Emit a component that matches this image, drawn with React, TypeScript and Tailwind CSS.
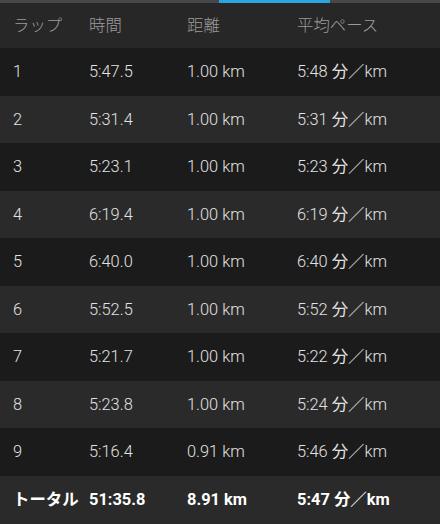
const laps = [
  { lap: "1", time: "5:47.5", dist: "1.00 km", pace: "5:48" },
  { lap: "2", time: "5:31.4", dist: "1.00 km", pace: "5:31" },
  { lap: "3", time: "5:23.1", dist: "1.00 km", pace: "5:23" },
  { lap: "4", time: "6:19.4", dist: "1.00 km", pace: "6:19" },
  { lap: "5", time: "6:40.0", dist: "1.00 km", pace: "6:40" },
  { lap: "6", time: "5:52.5", dist: "1.00 km", pace: "5:52" },
  { lap: "7", time: "5:21.7", dist: "1.00 km", pace: "5:22" },
  { lap: "8", time: "5:23.8", dist: "1.00 km", pace: "5:24" },
  { lap: "9", time: "5:16.4", dist: "0.91 km", pace: "5:46" },
];

const cols = "grid grid-cols-[76px_98px_110px_1fr] items-center pl-[13px] pt-[2px]";

export default function App() {
  return (
    <div
      className="w-[440px] h-[524px] overflow-hidden bg-[#1b1b1b] text-[16.4px]"
      style={{ fontFamily: 'Roboto, "Noto Sans CJK JP", sans-serif' }}
    >
      {/* tab indicator */}
      <div className="flex h-[3px] bg-[#474747]">
        <div className="w-[219px]" />
        <div className="w-[111px] bg-[#2aa4e2]" />
      </div>

      {/* header */}
      <div className={`${cols} h-[45px] bg-[#272727] text-[#9b9b9b] font-light`}>
        <span>ラップ</span>
        <span>時間</span>
        <span>距離</span>
        <span>平均ペース</span>
      </div>

      {laps.map((r, i) => (
        <div
          key={r.lap}
          className={`${cols} h-[47.5px] text-[#e2e2e2] font-light ${i % 2 === 0 ? "bg-[#1b1b1b]" : "bg-[#2a2a2a]"}`}
        >
          <span>{r.lap}</span>
          <span>{r.time}</span>
          <span>{r.dist}</span>
          <span>
            {r.pace} <span className="font-normal">分</span>／km
          </span>
        </div>
      ))}

      {/* total */}
      <div className={`${cols} h-[48.5px] bg-[#2a2a2a] text-white font-bold`}>
        <span>トータル</span>
        <span>51:35.8</span>
        <span>8.91 km</span>
        <span>5:47 分／km</span>
      </div>
    </div>
  );
}
